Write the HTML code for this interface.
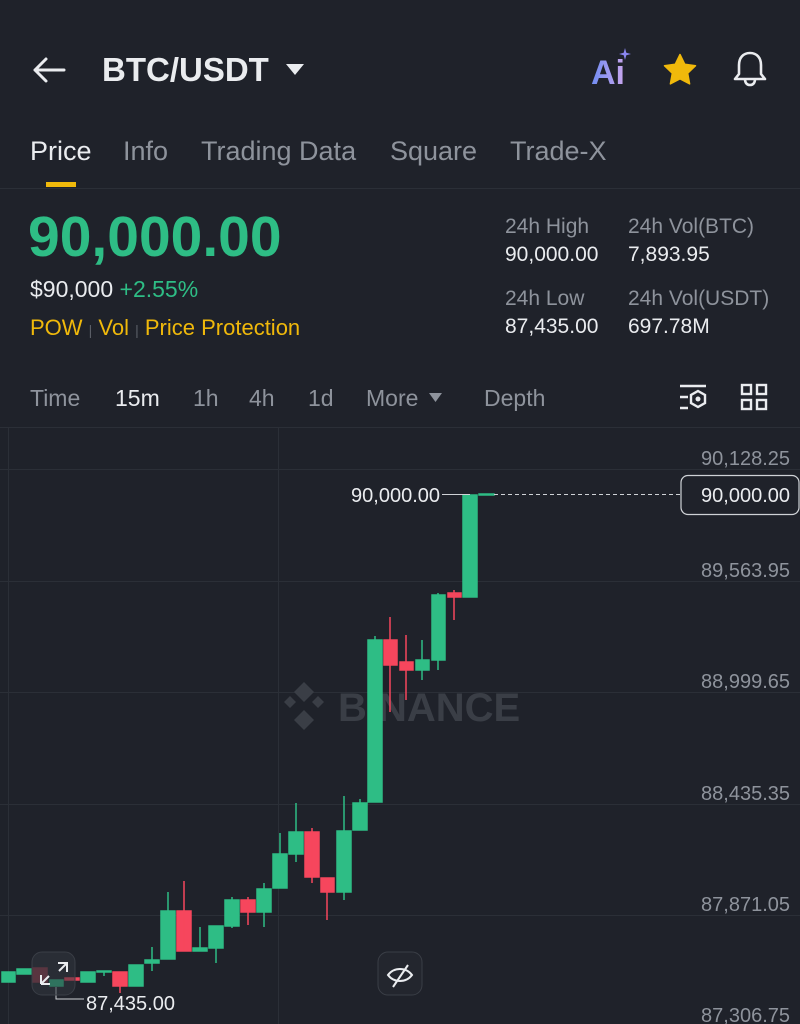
<!DOCTYPE html>
<html><head><meta charset="utf-8"><style>
body{margin:0;width:800px;height:1024px;background:#1f222a;font-family:"Liberation Sans",sans-serif;overflow:hidden;position:relative;color:#eaecef}
.a{position:absolute;white-space:nowrap}
.g{color:#8e939c}
</style></head><body>
<svg class="a" style="left:30px;top:55px" width="38" height="30" viewBox="0 0 38 30"><path d="M34 15H5M16 4L5 15l11 11" stroke="#eaecef" stroke-width="3" fill="none" stroke-linecap="round" stroke-linejoin="round"/></svg>
<div class="a" style="left:102px;top:51px;font-size:33px;font-weight:bold">BTC/USDT</div>
<svg class="a" style="left:286px;top:64px" width="18" height="12"><path d="M0 0h18L9 11z" fill="#eaecef"/></svg>
<svg class="a" style="left:588px;top:46px" width="50" height="44"><defs><linearGradient id="ag" x1="0" x2="1"><stop offset="0" stop-color="#6f8cf2"/><stop offset="1" stop-color="#c9a6ee"/></linearGradient></defs><text x="3" y="38" font-family="Liberation Sans" font-weight="bold" font-size="34" fill="url(#ag)">Ai</text><path d="M37 2l1.3 4.7 4.7 1.3-4.7 1.3L37 14l-1.3-4.7L31 8l4.7-1.3z" fill="#8a86f0"/></svg>
<svg class="a" style="left:662px;top:53px" width="36" height="34" viewBox="0 0 24 23"><path d="M12 1l3.2 6.6 7.3 1-5.3 5.1 1.3 7.2L12 17.5 5.5 20.9l1.3-7.2L1.5 8.6l7.3-1z" fill="#f0b90b" stroke="#f0b90b" stroke-linejoin="round"/></svg>
<svg class="a" style="left:732px;top:50px" width="36" height="40" viewBox="0 0 36 40"><path d="M18 3c-7 0-11 5-11 12v9l-4 5h30l-4-5v-9c0-7-4-12-11-12zM13 29c0 4 2 6 5 6s5-2 5-6" stroke="#eaecef" stroke-width="2.6" fill="none" stroke-linejoin="round"/></svg>

<div class="a" style="left:30px;top:136px;font-size:27px">Price</div>
<div class="a g" style="left:123px;top:136px;font-size:27px">Info</div>
<div class="a g" style="left:201px;top:136px;font-size:27px">Trading Data</div>
<div class="a g" style="left:390px;top:136px;font-size:27px">Square</div>
<div class="a g" style="left:510px;top:136px;font-size:27px">Trade-X</div>
<div class="a" style="left:46px;top:182px;width:30px;height:5px;background:#f0b90b"></div>
<div class="a" style="left:0;top:188px;width:800px;height:1px;background:#2b2f37"></div>

<div class="a" style="left:28px;top:204px;font-size:57px;font-weight:bold;color:#2ebd85">90,000.00</div>
<div class="a" style="left:30px;top:276px;font-size:23px">$90,000 <span style="color:#2ebd85">+2.55%</span></div>
<div class="a" style="left:30px;top:315px;font-size:22px;color:#f0b90b">POW <span style="color:#5a5e66;font-size:14px">|</span> Vol <span style="color:#5a5e66;font-size:14px">|</span> Price Protection</div>
<div class="a g" style="left:505px;top:215px;font-size:21px">24h High</div>
<div class="a" style="left:505px;top:243px;font-size:21px">90,000.00</div>
<div class="a g" style="left:628px;top:215px;font-size:21px">24h Vol(BTC)</div>
<div class="a" style="left:628px;top:243px;font-size:21px">7,893.95</div>
<div class="a g" style="left:505px;top:287px;font-size:21px">24h Low</div>
<div class="a" style="left:505px;top:315px;font-size:21px">87,435.00</div>
<div class="a g" style="left:628px;top:287px;font-size:21px">24h Vol(USDT)</div>
<div class="a" style="left:628px;top:315px;font-size:21px">697.78M</div>

<div class="a g" style="left:30px;top:385px;font-size:23px">Time</div>
<div class="a" style="left:115px;top:385px;font-size:23px">15m</div>
<div class="a g" style="left:193px;top:385px;font-size:23px">1h</div>
<div class="a g" style="left:249px;top:385px;font-size:23px">4h</div>
<div class="a g" style="left:308px;top:385px;font-size:23px">1d</div>
<div class="a g" style="left:366px;top:385px;font-size:23px">More</div>
<svg class="a" style="left:429px;top:393px" width="13" height="9"><path d="M0 0h13L6.5 9z" fill="#8e939c"/></svg>
<div class="a g" style="left:484px;top:385px;font-size:23px">Depth</div>
<svg class="a" style="left:678px;top:383px" width="30" height="30" viewBox="0 0 30 30"><path d="M2 3h26M2 14h8M2 25h8" stroke="#eaecef" stroke-width="2.4"/><path d="M20 8l7 4v8l-7 4-7-4v-8z" stroke="#eaecef" stroke-width="2.4" fill="none"/><circle cx="20" cy="16" r="2.5" fill="#eaecef"/></svg>
<svg class="a" style="left:740px;top:383px" width="28" height="28" viewBox="0 0 28 28"><g stroke="#eaecef" stroke-width="2.4" fill="none"><rect x="2" y="2" width="9" height="9"/><rect x="17" y="2" width="9" height="9"/><rect x="2" y="17" width="9" height="9"/><rect x="17" y="17" width="9" height="9"/></g></svg>

<svg class="a" style="left:0;top:0" width="800" height="1024">
<g stroke="#2b2f37" stroke-width="1">
<line x1="0" y1="427.5" x2="800" y2="427.5"/>
<line x1="0" y1="469.5" x2="800" y2="469.5"/>
<line x1="0" y1="581.5" x2="800" y2="581.5"/>
<line x1="0" y1="692.5" x2="800" y2="692.5"/>
<line x1="0" y1="804.5" x2="800" y2="804.5"/>
<line x1="0" y1="915.5" x2="800" y2="915.5"/>
<line x1="8.5" y1="427" x2="8.5" y2="1024"/>
<line x1="278.5" y1="427" x2="278.5" y2="1024"/>
</g>
<g font-family="Liberation Sans" font-size="20" fill="#8e939c" text-anchor="end">
<text x="790" y="465">90,128.25</text><text x="790" y="577">89,563.95</text><text x="790" y="688">88,999.65</text><text x="790" y="800">88,435.35</text><text x="790" y="911">87,871.05</text><text x="790" y="1022">87,306.75</text>
</g>
<g fill="#3a3e46" font-family="Liberation Sans" font-size="40" font-weight="bold"><text x="338" y="721">BINANCE</text><path d="M304 685l10 10-10 10-10-10zM290 699l6 6-6 6-6-6zM318 699l6 6-6 6-6-6zM304 713l10 10-10 10-10-10z" transform="translate(0,-3)"/></g>
<g fill="#2ebd85" stroke="#2ebd85" stroke-width="1.5">
<rect x="2" y="972" width="13" height="10"/><rect x="17" y="969" width="14" height="5"/><rect x="50" y="980" width="13" height="6"/><rect x="81" y="972" width="14" height="10"/><rect x="97" y="971" width="14" height="1"/><line x1="104" y1="971" x2="104" y2="976"/>
<rect x="129" y="965" width="14" height="21"/>
<rect x="145" y="960" width="14" height="3"/><line x1="152" y1="947" x2="152" y2="971"/>
<rect x="161" y="911" width="14" height="48"/><line x1="168" y1="892" x2="168" y2="911"/>
<rect x="193" y="948" width="14" height="3"/><line x1="200" y1="927" x2="200" y2="948"/>
<rect x="209" y="926" width="14" height="22"/><line x1="216" y1="948" x2="216" y2="963"/>
<rect x="225" y="900" width="14" height="26"/><line x1="232" y1="897" x2="232" y2="928"/>
<rect x="257" y="889" width="14" height="23"/><line x1="264" y1="883" x2="264" y2="927"/>
<rect x="273" y="854" width="14" height="34"/><line x1="280" y1="833" x2="280" y2="862"/>
<rect x="289" y="832" width="14" height="22"/><line x1="296" y1="803" x2="296" y2="862"/>
<rect x="337" y="831" width="14" height="61"/><line x1="344" y1="796" x2="344" y2="900"/>
<rect x="353" y="803" width="14" height="27"/><line x1="360" y1="799" x2="360" y2="803"/>
<rect x="368" y="640" width="14" height="162"/><line x1="375" y1="636" x2="375" y2="640"/>
<rect x="416" y="660" width="13" height="10"/><line x1="422" y1="640" x2="422" y2="680"/>
<rect x="432" y="595" width="13" height="65"/><line x1="438" y1="593" x2="438" y2="670"/>
<rect x="463" y="495" width="14" height="102"/>
<rect x="479" y="494" width="15" height="1"/>
</g>
<g fill="#f6465d" stroke="#f6465d" stroke-width="1.5">
<rect x="33" y="968" width="14" height="14" opacity=".5"/><rect x="65" y="978" width="14" height="2"/>
<rect x="113" y="972" width="14" height="14"/><line x1="120" y1="986" x2="120" y2="993"/>
<rect x="177" y="911" width="14" height="40"/><line x1="184" y1="881" x2="184" y2="951"/>
<rect x="241" y="900" width="14" height="12"/><line x1="248" y1="897" x2="248" y2="925"/>
<rect x="305" y="832" width="14" height="45"/><line x1="312" y1="828" x2="312" y2="883"/>
<rect x="321" y="878" width="13" height="14"/><line x1="327" y1="892" x2="327" y2="920"/>
<rect x="384" y="640" width="13" height="25"/><line x1="390" y1="617" x2="390" y2="712"/>
<rect x="400" y="662" width="13" height="8"/><line x1="406" y1="635" x2="406" y2="700"/>
<rect x="448" y="593" width="13" height="4"/><line x1="454" y1="590" x2="454" y2="620"/>
</g>
<line x1="442" y1="494.5" x2="470" y2="494.5" stroke="#cfd2d6" stroke-width="1"/>
<line x1="494" y1="494.5" x2="680" y2="494.5" stroke="#cfd2d6" stroke-width="1" stroke-dasharray="4 3"/>
<text x="440" y="502" font-family="Liberation Sans" font-size="20" fill="#eaecef" text-anchor="end">90,000.00</text>
<rect x="681" y="475.5" width="118" height="39" rx="7" fill="#1f222a" stroke="#cfd2d6" stroke-width="1.2"/>
<text x="790" y="502" font-family="Liberation Sans" font-size="20" fill="#eaecef" text-anchor="end">90,000.00</text>
<path d="M56 987v12h28" stroke="#cfd2d6" stroke-width="1" fill="none"/>
<text x="86" y="1010" font-family="Liberation Sans" font-size="20" fill="#eaecef">87,435.00</text>
<rect x="32" y="952" width="43" height="43" rx="10" fill="rgba(50,54,62,.55)" stroke="#3a3e46"/>
<path d="M58 963h9v9M67 963l-8 8M41 984v-9M41 984h9M41 984l8-8" stroke="#eaecef" stroke-width="2" fill="none"/>
<rect x="378" y="952" width="44" height="43" rx="10" fill="#23262e" stroke="#3a3e46"/>
<path d="M388 975c6-8 18-8 24 0c-6 8-18 8-24 0z M393 987l15-22" stroke="#eaecef" stroke-width="2" fill="none"/>
</svg>
</body></html>
